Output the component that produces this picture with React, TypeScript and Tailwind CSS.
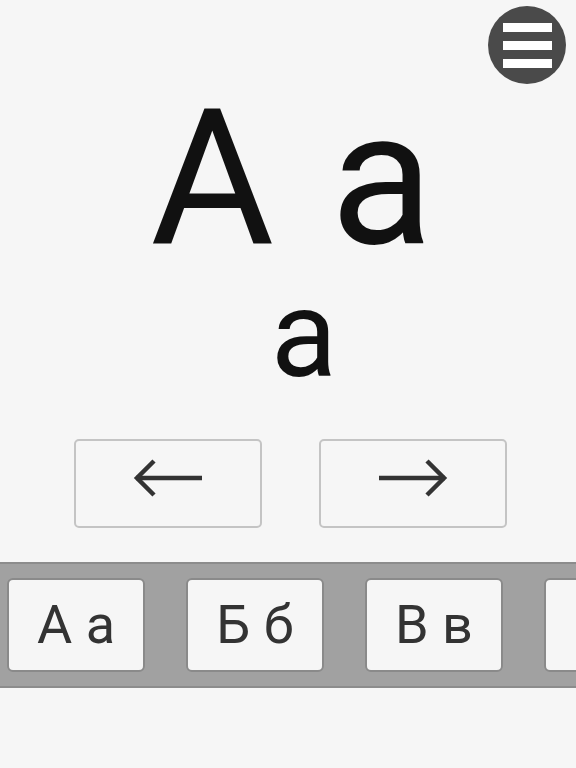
import { useState } from 'react'

const LETTERS = [
  ['А', 'а'],
  ['Б', 'б'],
  ['В', 'в'],
  ['Г', 'г'],
  ['Д', 'д'],
]

function LeftArrow() {
  return (
    <svg width="72" height="38" viewBox="0 0 72 38" fill="none" stroke="#333" strokeWidth="4.5">
      <line x1="4" y1="19" x2="70" y2="19" />
      <polyline points="22,2 5,19 22,36" strokeLinejoin="miter" />
    </svg>
  )
}

function RightArrow() {
  return (
    <svg width="72" height="38" viewBox="0 0 72 38" fill="none" stroke="#333" strokeWidth="4.5">
      <line x1="2" y1="19" x2="68" y2="19" />
      <polyline points="50,2 67,19 50,36" strokeLinejoin="miter" />
    </svg>
  )
}

export default function App() {
  const [idx, setIdx] = useState(0)
  const [upper, lower] = LETTERS[idx]

  return (
    <div className="relative min-h-[768px] w-[576px] overflow-hidden bg-[#f6f6f6] font-['Roboto',sans-serif]">
      {/* menu button */}
      <button className="absolute right-[10px] top-[6px] flex h-[78px] w-[78px] flex-col items-center justify-center gap-[9px] rounded-full bg-[#4a4a4a]">
        <span className="block h-[9px] w-[49px] bg-white" />
        <span className="block h-[9px] w-[49px] bg-white" />
        <span className="block h-[9px] w-[49px] bg-white" />
      </button>

      <div className="flex flex-col items-center pt-[83px]">
        <div className="ml-[8px] flex text-[190px] leading-none text-[#111]">
          <span>{upper}</span>
          <span className="ml-[56px]">{lower}</span>
        </div>
        <div className="ml-[32px] mt-[1px] text-[122px] leading-none text-[#111]">{lower}</div>

        <div className="ml-[4px] mt-[43px] flex gap-[57px]">
          <button
            onClick={() => setIdx((idx + LETTERS.length - 1) % LETTERS.length)}
            className="flex h-[89px] w-[188px] items-center justify-center rounded-[5px] border-2 border-[#c4c4c4] bg-[#f6f6f6] pb-[12px]"
          >
            <LeftArrow />
          </button>
          <button
            onClick={() => setIdx((idx + 1) % LETTERS.length)}
            className="flex h-[89px] w-[188px] items-center justify-center rounded-[5px] border-2 border-[#c4c4c4] bg-[#f6f6f6] pb-[12px]"
          >
            <RightArrow />
          </button>
        </div>
      </div>

      <div className="mt-[34px] flex h-[126px] items-center gap-[41px] overflow-hidden border-y-2 border-[#8c8c8c] bg-[#a1a1a1] px-[7px]">
        {LETTERS.map(([u, l], i) => (
          <button
            key={i}
            onClick={() => setIdx(i)}
            className="flex h-[94px] w-[138px] shrink-0 items-center justify-center rounded-[6px] border-2 border-[#8a8a8a] bg-[#f6f6f6] text-[54px] leading-none text-[#333]"
          >
            <span className="whitespace-pre">
              {u} {l}
            </span>
          </button>
        ))}
      </div>
    </div>
  )
}
